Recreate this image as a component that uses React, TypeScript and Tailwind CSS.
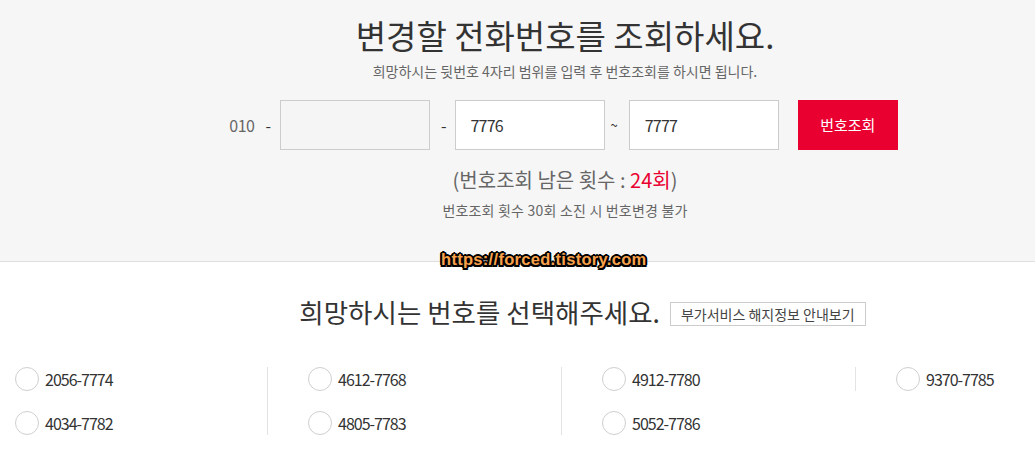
import React from "react";

const cols: string[][] = [
  ["2056-7774", "4034-7782"],
  ["4612-7768", "4805-7783"],
  ["4912-7780", "5052-7786"],
  ["9370-7785"],
];

function Item({ num }: { num: string }) {
  return (
    <div className="flex h-[24px] items-center gap-[6px]">
      <span className="h-[24px] w-[24px] rounded-full border border-[#cfcfcf] bg-white" />
      <span className="text-[16px] leading-[24px] tracking-[-1px] text-[#333]">{num}</span>
    </div>
  );
}

export default function App() {
  return (
    <div
      className="relative min-h-[452px] w-full overflow-hidden bg-white"
      style={{ fontFamily: '"Noto Sans CJK KR", "Noto Sans", sans-serif' }}
    >
      <div className="relative w-[1130px]">
        <section className="flex h-[262px] flex-col items-center border-b border-[#dedede] bg-[#f6f6f6] pt-[13px]">
          <h1 className="text-[33px] font-normal leading-[44px] text-[#333]">변경할 전화번호를 조회하세요.</h1>
          <p className="mt-[4px] text-[14px] leading-[20px] text-[#666]">
            희망하시는 뒷번호 4자리 범위를 입력 후 번호조회를 하시면 됩니다.
          </p>
          <div className="mt-[19px] flex h-[50px] items-center pr-[3px] text-[16px] text-[#333]">
            <span className="tracking-[-0.5px] text-[#666]">010</span>
            <span className="ml-[11px] mr-[9px]">-</span>
            <div className="h-[50px] w-[150px] border border-[#cccccc] bg-[#f5f5f5]" />
            <span className="ml-[11px] mr-[8px]">-</span>
            <div className="flex h-[50px] w-[150px] items-center border border-[#cccccc] bg-white pl-[15px] tracking-[-0.8px]">
              7776
            </div>
            <span className="ml-[6px] mr-[11px] text-[13px]">~</span>
            <div className="flex h-[50px] w-[150px] items-center border border-[#cccccc] bg-white pl-[15px] tracking-[-0.8px]">
              7777
            </div>
            <button className="ml-[19px] flex h-[50px] w-[100px] items-center justify-center bg-[#ea0030] text-[15px] text-white">
              번호조회
            </button>
          </div>
          <p className="mt-[16px] text-[20px] leading-[28px] text-[#666]">
            (번호조회 남은 횟수 : <span className="text-[#ea0030]">24회</span>)
          </p>
          <p className="mt-[6px] text-[14px] leading-[20px] tracking-[0.2px] text-[#666]">
            번호조회 횟수 30회 소진 시 번호변경 불가
          </p>
        </section>

        <section className="pt-[31px]">
          <div className="flex items-center justify-center pl-[35px]">
            <h2 className="text-[26.5px] font-normal leading-[38px] text-[#333]">희망하시는 번호를 선택해주세요.</h2>
            <button className="ml-[10px] mt-[4px] h-[24px] border border-[#cccccc] bg-white px-[10px] text-[14px] leading-[22px] text-[#444]">
              부가서비스 해지정보 안내보기
            </button>
          </div>

          <div className="mt-[36px] flex items-start">
            {cols.map((c, i) => (
              <div
                key={i}
                className={
                  i === 0
                    ? "flex w-[267px] shrink-0 flex-col gap-[20px] pl-[15px]"
                    : "flex w-[294px] shrink-0 flex-col gap-[20px] border-l border-[#e3e3e3] pl-[40px]"
                }
              >
                {c.map((n) => (
                  <Item key={n} num={n} />
                ))}
              </div>
            ))}
          </div>
        </section>

        <div
          className="absolute left-[441px] top-[248px] text-[16.5px] font-bold leading-[22px] tracking-[0.3px] text-[#f8a24c] [text-shadow:-1.5px_-1.5px_0_#000,1.5px_-1.5px_0_#000,-1.5px_1.5px_0_#000,1.5px_1.5px_0_#000,0_2px_0_#000,0_-2px_0_#000,2px_0_0_#000,-2px_0_0_#000]"
          style={{ fontFamily: '"Liberation Sans", Arial, sans-serif' }}
        >
          https://forced.tistory.com
        </div>
      </div>
    </div>
  );
}
